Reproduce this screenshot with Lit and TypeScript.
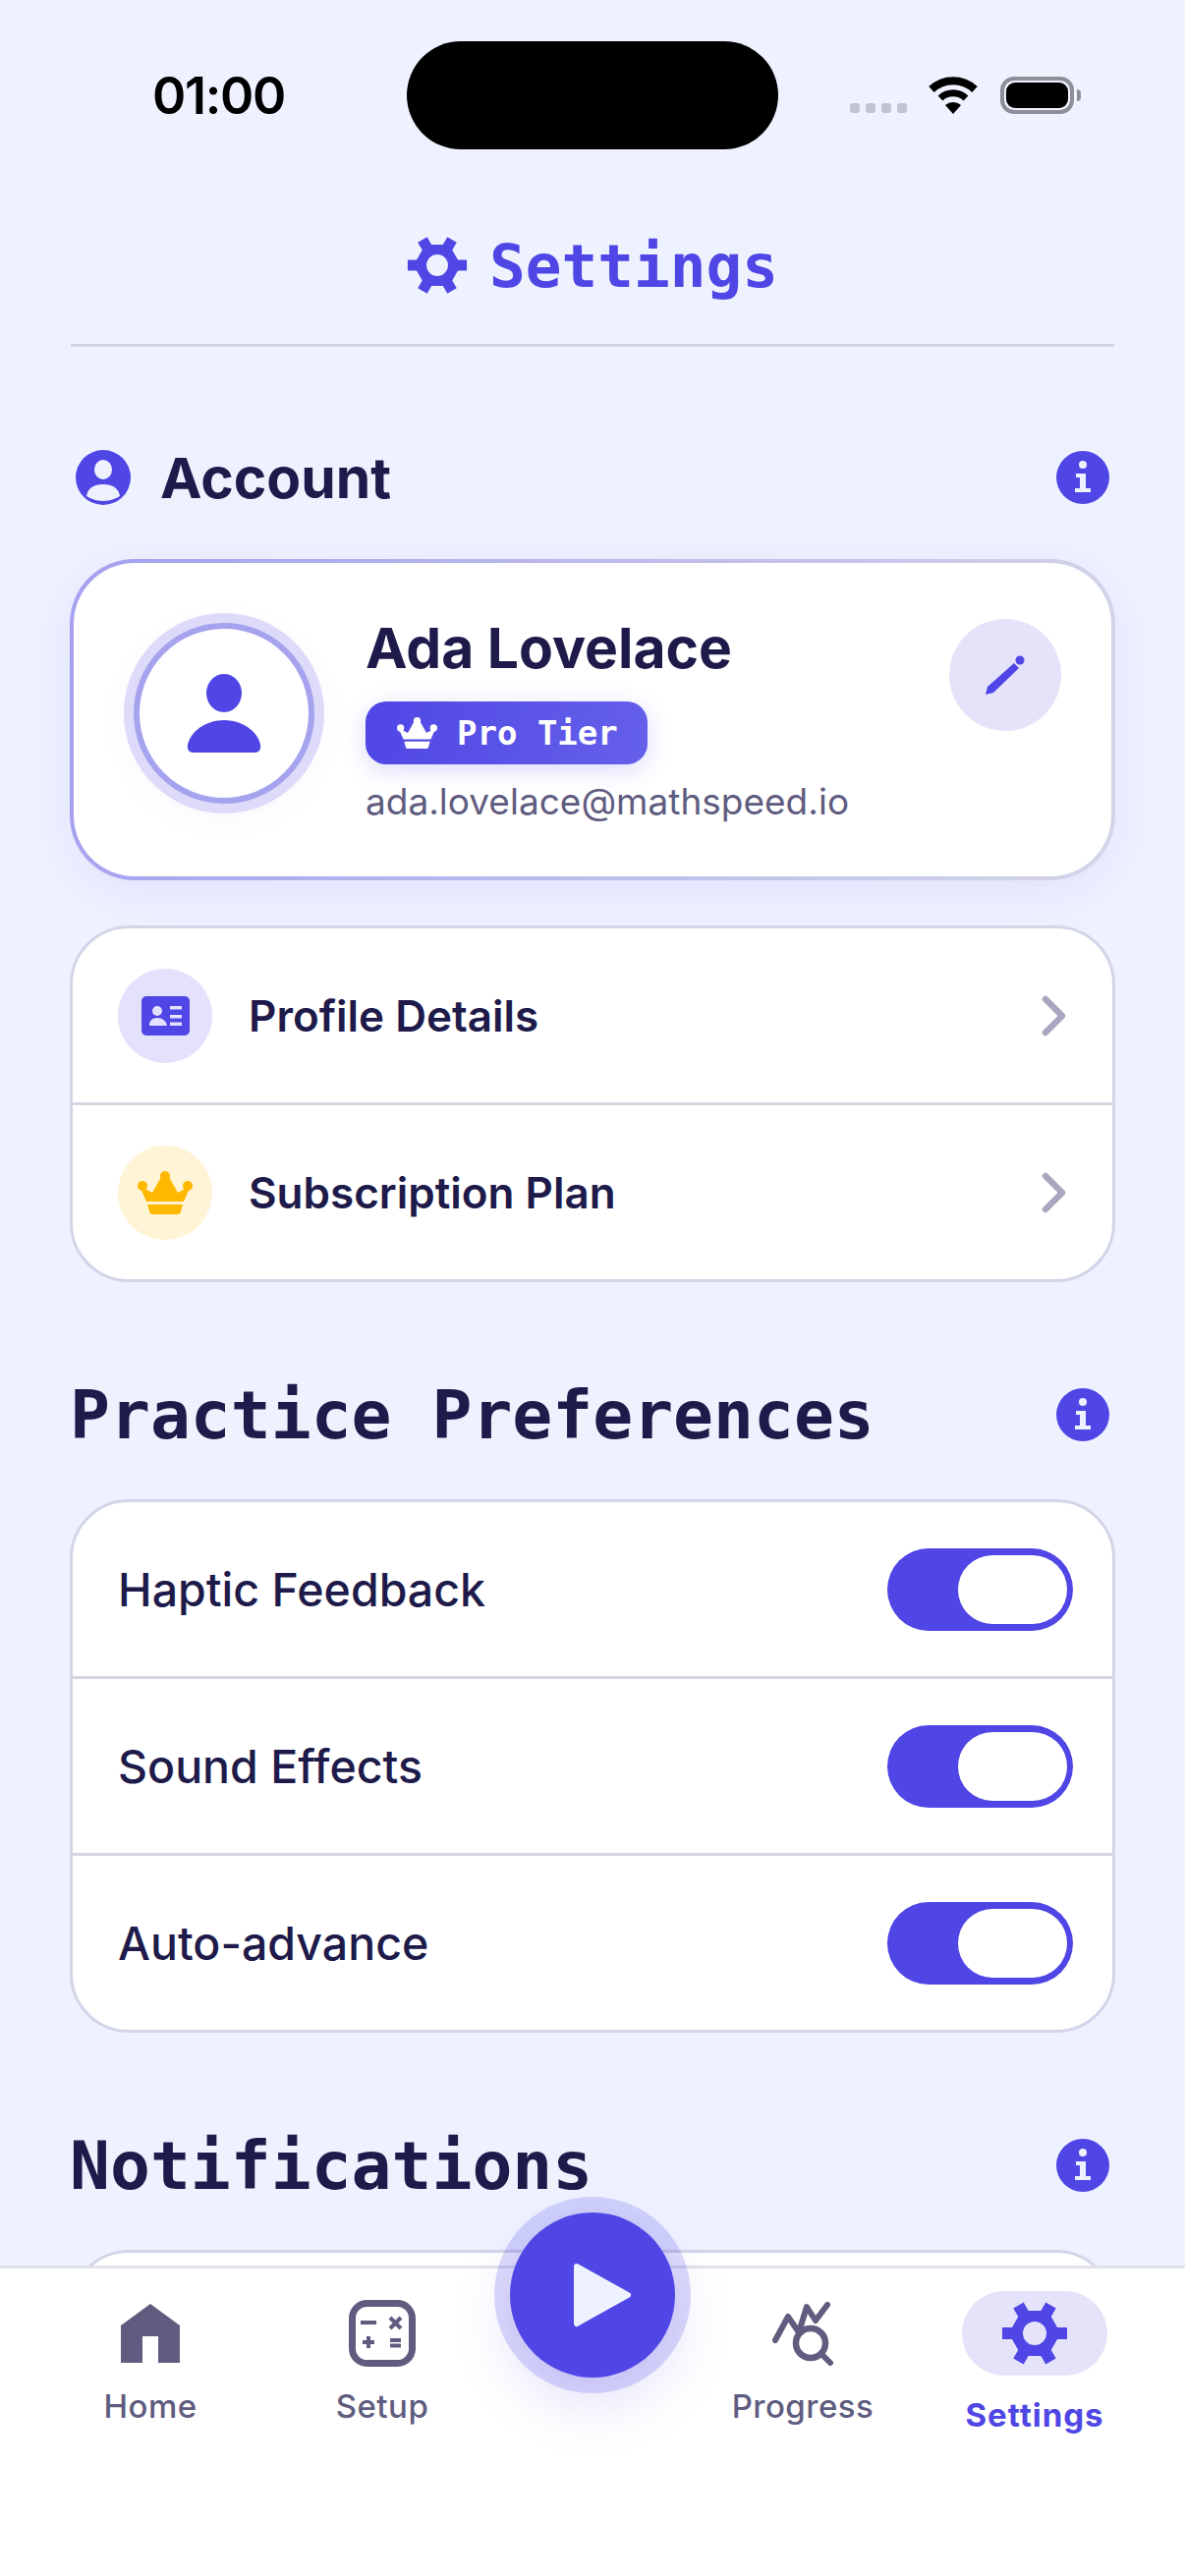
import { LitElement, html, css, svg } from "lit";
import { customElement } from "lit/decorators.js";

const gear = (size: number, color: string) => html`<svg width=${size} height=${size} viewBox="-34 -34 68 68">
  <path
    fill-rule="evenodd"
    d="M26.500 0L13.250 23H-13.250L-26.500 0L-13.250 -23H13.250ZM12 0A12 12 0 1 0 -12 0A12 12 0 1 0 12 0Z"
    fill=${color}
  ></path>
  ${[0, 60, 120, 180, 240, 300].map(
    (a) => svg`<rect x="20" y="-6" width="13" height="12" fill=${color} transform="rotate(${a})"></rect>`
  )}
</svg>`;

const info = html`<svg class="info" width="54" height="54" viewBox="-27 -27 54 54">
  <circle r="27" fill="#4f46e5"></circle>
  <circle cy="-13" r="4" fill="#eef2ff"></circle>
  <path d="M-7 -4H3V11H8V15H-8V11H-3V0H-7Z" fill="#eef2ff"></path>
</svg>`;

const crown = (w: number, h: number, color: string) => html`<svg width=${w} height=${h} viewBox="0 0 56 44">
  <circle cx="5" cy="15" r="5" fill=${color}></circle>
  <circle cx="28" cy="5" r="5" fill=${color}></circle>
  <circle cx="51" cy="15" r="5" fill=${color}></circle>
  <path d="M2 15L15 22L24 6H32L41 22L54 15L47 31H9Z" fill=${color}></path>
  <path d="M10 34H46L44 41Q43.500 44 41 44H15Q12.500 44 12 41Z" fill=${color}></path>
</svg>`;

const chevron = html`<svg width="30" height="44" viewBox="0 0 30 44">
  <path d="M6 5L23 22L6 39" fill="none" stroke="#a9a7bf" stroke-width="6.500" stroke-linecap="round" stroke-linejoin="round"></path>
</svg>`;

@customElement("app-root")
class AppRoot extends LitElement {
  static styles = css`
    :host {
      display: block;
      font-family: Inter, "Noto Sans", sans-serif;
      color: #1e1b4b;
    }

    .page {
      position: relative;
      height: 2622px;
      overflow: hidden;
      background: #eef2ff;
    }

    .status {
      display: grid;
      grid-template-columns: 414px 378px 1fr;
      align-items: center;
      height: 110px;
      padding-top: 42px;
    }

    .time {
      padding-left: 155px;
      font-size: 52px;
      font-weight: 600;
      color: #000;
      letter-spacing: -1.300px;
    }

    .island {
      height: 110px;
      background: #000;
      border-radius: 55px;
    }

    .indicators {
      display: flex;
      align-items: center;
      padding-left: 73px;
    }

    .dots {
      display: flex;
      gap: 6px;
      margin-top: 26px;
      margin-right: 22px;
    }

    .dots i {
      width: 10px;
      height: 10px;
      border-radius: 3px;
      background: #c0c3d2;
    }

    .battery {
      box-sizing: border-box;
      width: 75px;
      height: 38px;
      margin-left: 23px;
      padding: 2px;
      border: 4px solid #8e8e98;
      border-radius: 14px;
    }

    .battery i {
      display: block;
      height: 100%;
      background: #000;
      border-radius: 9px;
    }

    .nub {
      width: 4px;
      height: 12px;
      margin-left: 3px;
      background: #8e8e98;
      border-radius: 0 4px 4px 0;
    }

    .top {
      display: flex;
      justify-content: center;
      align-items: center;
      gap: 22px;
      height: 64px;
      margin: 86px 72px 0;
      padding-bottom: 48px;
      border-bottom: 3px solid #cfd3e6;
      font: 700 61px "DejaVu Sans Mono", monospace;
      color: #4f46e5;
    }

    .content {
      padding: 0 71px;
    }

    .head {
      display: flex;
      align-items: center;
      justify-content: space-between;
      height: 60px;
      padding-right: 6px;
    }

    .head h2 {
      margin: 0;
      font: 700 68px "DejaVu Sans Mono", monospace;
      color: #1e1b4b;
    }

    .account {
      margin-top: 103px;
    }

    .account .label {
      display: flex;
      align-items: center;
      gap: 30px;
      padding-left: 6px;
      font-size: 57px;
      font-weight: 700;
    }

    .profile {
      box-sizing: border-box;
      display: flex;
      align-items: center;
      height: 327px;
      margin-top: 53px;
      padding: 0 51px 0 61px;
      border: 4px solid transparent;
      border-radius: 66px;
      background: linear-gradient(#fff, #fff) padding-box,
        linear-gradient(100deg, #a5a0f0, #d3d5e8) border-box;
      box-shadow: 0 12px 60px rgba(79, 70, 229, 0.08);
    }

    .avatar {
      box-sizing: border-box;
      display: flex;
      align-items: center;
      justify-content: center;
      flex: none;
      width: 184px;
      height: 184px;
      margin-top: -14px;
      border: 6px solid #a5a3ee;
      border-radius: 50%;
      background: #fff;
      box-shadow: 0 0 0 10px #dddbf9, 0 8px 40px rgba(79, 70, 229, 0.06);
    }

    .who {
      flex: 1;
      padding-left: 52px;
      margin-top: -2px;
    }

    .name {
      font-size: 57px;
      font-weight: 700;
      line-height: 70px;
    }

    .tier {
      display: inline-flex;
      align-items: center;
      gap: 20px;
      height: 64px;
      margin-top: 19px;
      padding: 0 30px 0 32px;
      border-radius: 21px;
      background: linear-gradient(100deg, #4f46e5, #6560ea);
      box-shadow: 0 6px 24px rgba(79, 70, 229, 0.2);
      color: #fff;
      font: 700 34px "DejaVu Sans Mono", monospace;
    }

    .email {
      margin-top: 15px;
      font-size: 37px;
      color: #5f5c80;
    }

    .edit {
      display: flex;
      align-items: center;
      justify-content: center;
      width: 114px;
      height: 114px;
      margin-top: -92px;
      border-radius: 50%;
      background: #e5e3f9;
    }

    .card {
      overflow: hidden;
      border: 3px solid #d3d5e8;
      border-radius: 60px;
      background: #fff;
    }

    .row {
      display: flex;
      align-items: center;
      height: 177px;
      padding: 0 40px 0 46px;
      font-size: 46.500px;
      font-weight: 500;
    }

    .row + .row {
      border-top: 3px solid #d5d6e0;
    }

    .row.nav {
      padding-right: 44px;
      font-size: 44px;
      font-weight: 600;
    }

    .row .text {
      flex: 1;
    }

    .bubble {
      display: flex;
      align-items: center;
      justify-content: center;
      width: 96px;
      height: 96px;
      margin-right: 37px;
      border-radius: 50%;
      background: #e3e1fc;
    }

    .bubble.gold {
      background: #fff4d6;
    }

    .account-list {
      margin-top: 46px;
    }

    .section {
      margin-top: 105px;
    }

    .section .card {
      margin-top: 56px;
    }

    .toggle {
      box-sizing: border-box;
      display: flex;
      justify-content: flex-end;
      width: 189px;
      height: 84px;
      padding: 7px 6px;
      border-radius: 42px;
      background: #4f46e5;
    }

    .toggle i {
      display: block;
      width: 111px;
      border-radius: 35px;
      background: #fff;
    }

    .tabbar {
      position: absolute;
      left: 0;
      right: 0;
      bottom: 0;
      box-sizing: border-box;
      display: grid;
      grid-template-columns: 236px 236px 1fr 236px 236px;
      height: 316px;
      padding: 0 35px;
      border-top: 3px solid #e0e2ec;
      background: #fff;
    }

    .tab {
      display: flex;
      flex-direction: column;
      align-items: center;
      padding-top: 32px;
      font-size: 33px;
      font-weight: 500;
      letter-spacing: 0.500px;
      color: #5f5c80;
    }

    .tab .ic {
      display: flex;
      align-items: center;
      justify-content: center;
      height: 68px;
    }

    .tab span {
      margin-top: 20px;
      line-height: 40px;
    }

    .tab.active {
      padding-top: 23px;
      font-weight: 700;
      letter-spacing: 1px;
      color: #4f46e5;
    }

    .tab.active .ic {
      width: 148px;
      height: 86px;
      border-radius: 43px;
      background: #e5e3f9;
    }

    .play {
      position: absolute;
      left: 519px;
      top: -57px;
      box-sizing: border-box;
      display: flex;
      align-items: center;
      justify-content: center;
      width: 168px;
      height: 168px;
      padding-left: 20px;
      border-radius: 50%;
      background: #4f46e5;
      box-shadow: 0 0 0 16px rgba(79, 70, 229, 0.2), 0 24px 60px rgba(79, 70, 229, 0.18);
    }
  `;

  render() {
    return html`<div class="page">
      <div class="status">
        <div class="time">01:00</div>
        <div class="island"></div>
        <div class="indicators">
          <div class="dots"><i></i><i></i><i></i><i></i></div>
          <svg width="50" height="38" viewBox="0 0 50 38">
            <path d="M3 13A32 32 0 0 1 47 13" fill="none" stroke="#000" stroke-width="8"></path>
            <path d="M12 22A19 19 0 0 1 38 22" fill="none" stroke="#000" stroke-width="7"></path>
            <path d="M25 38L17 29A12 12 0 0 1 33 29Z" fill="#000"></path>
          </svg>
          <div class="battery"><i></i></div>
          <div class="nub"></div>
        </div>
      </div>

      <div class="top">${gear(62, "#4f46e5")}<span>Settings</span></div>

      <div class="content">
        <div class="head account">
          <div class="label">
            <svg width="56" height="56" viewBox="-28 -28 56 56">
              <circle r="28" fill="#4f46e5"></circle>
              <ellipse cy="-8" rx="9" ry="10" fill="#eef2ff"></ellipse>
              <path d="M-17 19Q-15 7 0 7Q15 7 17 19Q9 24 0 24Q-9 24 -17 19Z" fill="#eef2ff"></path>
            </svg>
            Account
          </div>
          ${info}
        </div>

        <div class="profile">
          <div class="avatar">
            <svg width="76" height="80" viewBox="0 0 76 80">
              <ellipse cx="38" cy="19.500" rx="18" ry="19.500" fill="#4f46e5"></ellipse>
              <path d="M1 72C4 58 20 47 38 47C56 47 72 58 75 72Q76 80 69 80H7Q0 80 1 72Z" fill="#4f46e5"></path>
            </svg>
          </div>
          <div class="who">
            <div class="name">Ada Lovelace</div>
            <div class="tier">${crown(41, 34, "#fff")}<span>Pro Tier</span></div>
            <div class="email">ada.lovelace@mathspeed.io</div>
          </div>
          <div class="edit">
            <svg width="44" height="44" viewBox="0 0 44 44">
              <path d="M2 42L4 34L31 10L36 15L10 40Z" fill="#4f46e5"></path>
              <circle cx="37" cy="7" r="4.500" fill="#4f46e5"></circle>
            </svg>
          </div>
        </div>

        <div class="card account-list">
          <div class="row nav">
            <div class="bubble">
              <svg width="49" height="40" viewBox="0 0 49 40">
                <rect width="49" height="40" rx="5" fill="#4f46e5"></rect>
                <circle cx="16" cy="15" r="5" fill="#e3e1fc"></circle>
                <path d="M8 30Q8 22 16 22Q24 22 26 30Z" fill="#e3e1fc"></path>
                <path d="M29 10H41V13.500H29ZM29 19H41V22.500H29ZM29 26.500H41V30H29Z" fill="#e3e1fc"></path>
              </svg>
            </div>
            <div class="text">Profile Details</div>
            ${chevron}
          </div>
          <div class="row nav">
            <div class="bubble gold">${crown(56, 44, "#ffb800")}</div>
            <div class="text">Subscription Plan</div>
            ${chevron}
          </div>
        </div>

        <div class="section">
          <div class="head"><h2>Practice Preferences</h2>${info}</div>
          <div class="card">
            ${["Haptic Feedback", "Sound Effects", "Auto-advance"].map(
              (t) => html`<div class="row">
                <div class="text">${t}</div>
                <div class="toggle"><i></i></div>
              </div>`
            )}
          </div>
        </div>

        <div class="section">
          <div class="head"><h2>Notifications</h2>${info}</div>
          <div class="card">
            <div class="row"></div>
          </div>
        </div>
      </div>

      <div class="tabbar">
        <div class="tab">
          <div class="ic">
            <svg width="60" height="60" viewBox="0 0 60 60">
              <path d="M30 0L60 22V60H38V33H22V60H0V22Z" fill="#5f5c80"></path>
            </svg>
          </div>
          <span>Home</span>
        </div>
        <div class="tab">
          <div class="ic">
            <svg width="68" height="68" viewBox="0 0 68 68">
              <rect x="3.500" y="3.500" width="61" height="61" rx="15" fill="none" stroke="#5f5c80" stroke-width="7"></rect>
              <path
                d="M12 23H28M42 18L53 29M53 18L42 29M14 43H26M20 37V49M42 41H53M42 46.500H53"
                fill="none"
                stroke="#5f5c80"
                stroke-width="4"
              ></path>
            </svg>
          </div>
          <span>Setup</span>
        </div>
        <div class="tab"></div>
        <div class="tab">
          <div class="ic">
            <svg width="64" height="66" viewBox="0 0 64 66">
              <path d="M4 40L17 16L28 32L36 6L45 20L57 4" fill="none" stroke="#5f5c80" stroke-width="6" stroke-linecap="round" stroke-linejoin="round"></path>
              <circle cx="40" cy="43" r="15" fill="#fff" stroke="#5f5c80" stroke-width="6.500"></circle>
              <path d="M52 55L60 63" fill="none" stroke="#5f5c80" stroke-width="6" stroke-linecap="round"></path>
            </svg>
          </div>
          <span>Progress</span>
        </div>
        <div class="tab active">
          <div class="ic">${gear(68, "#4f46e5")}</div>
          <span>Settings</span>
        </div>
        <div class="play">
          <svg width="60" height="66" viewBox="0 0 60 66">
            <path d="M4 4L56 33L4 62Z" fill="#eef2ff" stroke="#eef2ff" stroke-width="6" stroke-linejoin="round"></path>
          </svg>
        </div>
      </div>
    </div>`;
  }
}
